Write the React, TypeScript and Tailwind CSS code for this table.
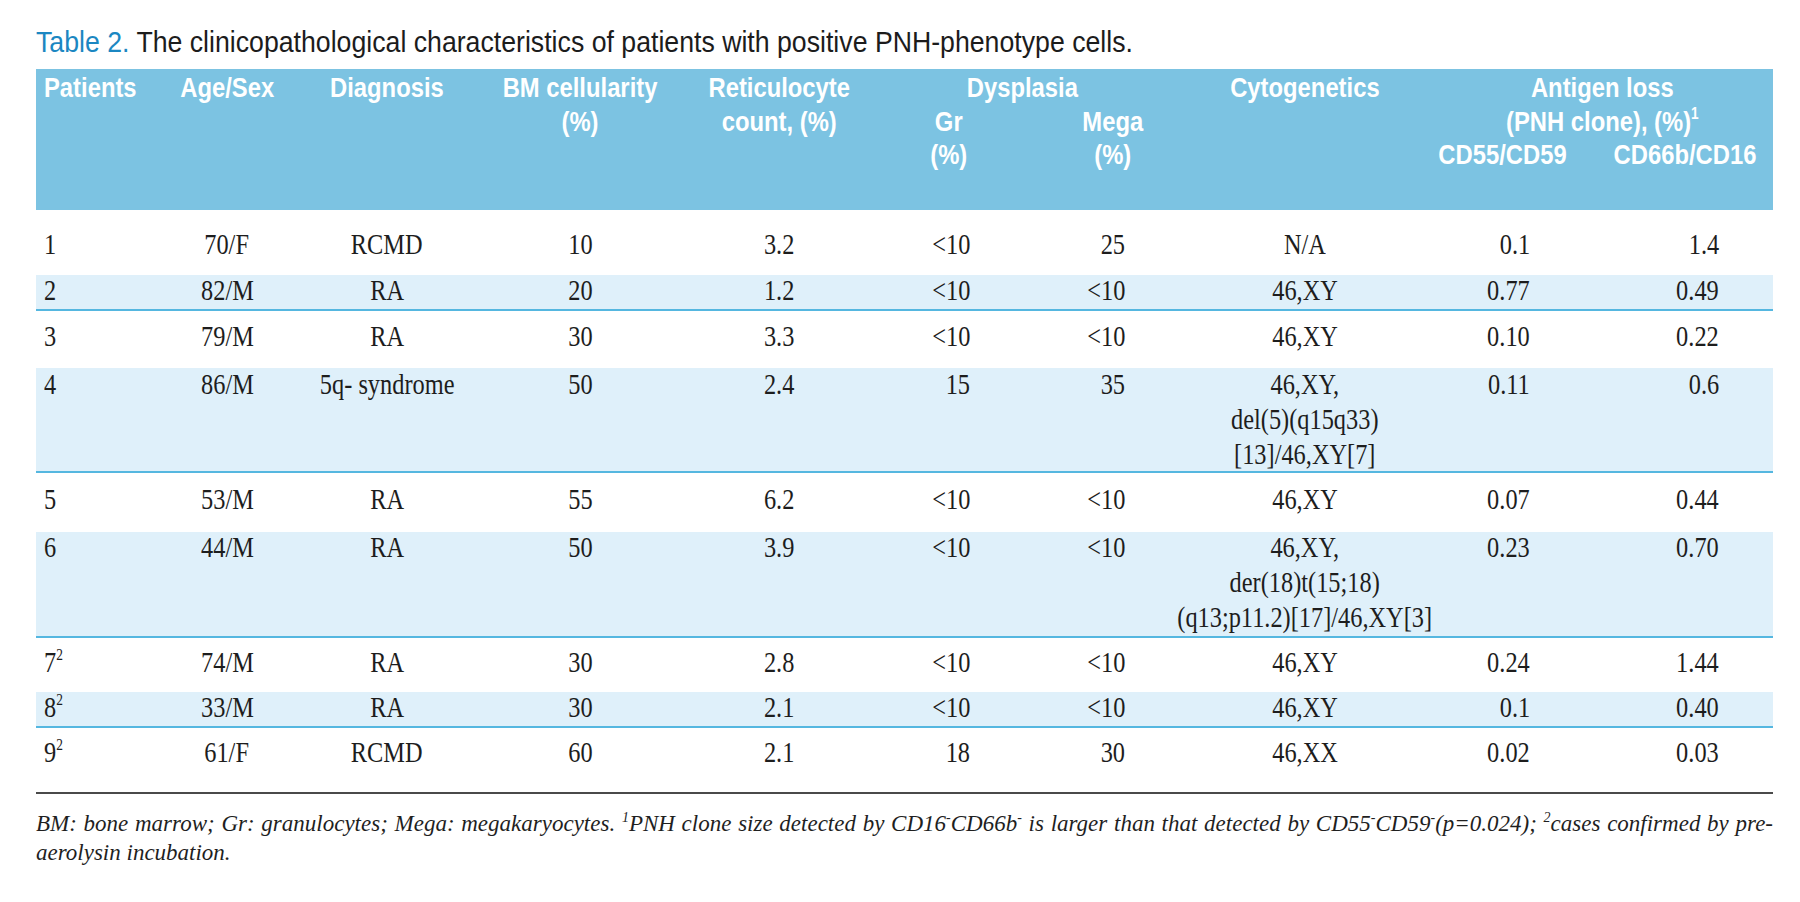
import React from "react";

const gridCols =
  "grid grid-cols-[124px_134px_186px_200px_199px_140px_188px_196px_198px_172px]";

const cellCls = [
  "flex justify-start pl-[8px]",
  "flex justify-center",
  "flex justify-center",
  "flex justify-center",
  "flex justify-center",
  "flex justify-end pr-[49px]",
  "flex justify-end pr-[82px]",
  "flex justify-center",
  "flex justify-end pr-[71px]",
  "flex justify-end pr-[54px]",
];

const originCls = [
  "origin-left text-left",
  "origin-center text-center",
  "origin-center text-center",
  "origin-center text-center",
  "origin-center text-center",
  "origin-right text-right",
  "origin-right text-right",
  "origin-center text-center",
  "origin-right text-right",
  "origin-right text-right",
];

const Sup2 = () => <sup className="text-[16px] relative -top-[12px] leading-none align-baseline">2</sup>;

type Row = {
  h: string;
  mt: string;
  band: boolean;
  cells: React.ReactNode[];
};

const rows: Row[] = [
  { h: "h-[65px]", mt: "mt-[17px]", band: false, cells: ["1", "70/F", "RCMD", "10", "3.2", "<10", "25", "N/A", "0.1", "1.4"] },
  { h: "h-[36px]", mt: "-mt-[2px]", band: true, cells: ["2", "82/M", "RA", "20", "1.2", "<10", "<10", "46,XY", "0.77", "0.49"] },
  { h: "h-[57px]", mt: "mt-[8px]", band: false, cells: ["3", "79/M", "RA", "30", "3.3", "<10", "<10", "46,XY", "0.10", "0.22"] },
  {
    h: "h-[105px]",
    mt: "-mt-[1px]",
    band: true,
    cells: [
      "4",
      "86/M",
      "5q- syndrome",
      "50",
      "2.4",
      "15",
      "35",
      <>
        46,XY,
        <br />
        del(5)(q15q33)
        <br />
        [13]/46,XY[7]
      </>,
      "0.11",
      "0.6",
    ],
  },
  { h: "h-[59px]", mt: "mt-[9px]", band: false, cells: ["5", "53/M", "RA", "55", "6.2", "<10", "<10", "46,XY", "0.07", "0.44"] },
  {
    h: "h-[106px]",
    mt: "-mt-[2px]",
    band: true,
    cells: [
      "6",
      "44/M",
      "RA",
      "50",
      "3.9",
      "<10",
      "<10",
      <>
        46,XY,
        <br />
        der(18)t(15;18)
        <br />
        (q13;p11.2)[17]/46,XY[3]
      </>,
      "0.23",
      "0.70",
    ],
  },
  {
    h: "h-[54px]",
    mt: "mt-[7px]",
    band: false,
    cells: [<>7<Sup2 /></>, "74/M", "RA", "30", "2.8", "<10", "<10", "46,XY", "0.24", "1.44"],
  },
  {
    h: "h-[36px]",
    mt: "-mt-[2px]",
    band: true,
    cells: [<>8<Sup2 /></>, "33/M", "RA", "30", "2.1", "<10", "<10", "46,XY", "0.1", "0.40"],
  },
  {
    h: "h-[64px]",
    mt: "mt-[7px]",
    band: false,
    cells: [<>9<Sup2 /></>, "61/F", "RCMD", "60", "2.1", "18", "30", "46,XX", "0.02", "0.03"],
  },
];

function Hd({ children, origin = "origin-center" }: { children: React.ReactNode; origin?: string }) {
  return <span className={`inline-block whitespace-nowrap scale-x-[0.85] ${origin}`}>{children}</span>;
}

function Header() {
  return (
    <div className="h-[141px] bg-[#7cc3e2] pt-[2px] text-white font-bold text-[28px] leading-[33.5px] font-['Liberation_Sans',Arial,sans-serif]">
      <div className={`${gridCols} grid-rows-[33.5px_33.5px_33.5px]`}>
        <div className="col-start-1 row-start-1 pl-[8px] text-left">
          <Hd origin="origin-left">Patients</Hd>
        </div>
        <div className="col-start-2 row-start-1 text-center">
          <Hd>Age/Sex</Hd>
        </div>
        <div className="col-start-3 row-start-1 text-center">
          <Hd>Diagnosis</Hd>
        </div>
        <div className="col-start-4 row-start-1 row-span-2 text-center">
          <Hd>
            BM cellularity
            <br />
            (%)
          </Hd>
        </div>
        <div className="col-start-5 row-start-1 row-span-2 text-center">
          <Hd>
            Reticulocyte
            <br />
            count, (%)
          </Hd>
        </div>
        <div className="col-start-6 col-span-2 row-start-1 pr-[42px] text-center">
          <Hd>Dysplasia</Hd>
        </div>
        <div className="col-start-6 row-start-2 row-span-2 text-center">
          <Hd>
            Gr
            <br />
            (%)
          </Hd>
        </div>
        <div className="col-start-7 row-start-2 row-span-2 text-center">
          <Hd>
            Mega
            <br />
            (%)
          </Hd>
        </div>
        <div className="col-start-8 row-start-1 text-center">
          <Hd>Cytogenetics</Hd>
        </div>
        <div className="col-start-9 col-span-2 row-start-1 row-span-2 pl-[28px] text-center">
          <Hd>
            Antigen loss
            <br />
            (PNH clone), (%)
            <sup className="text-[16px] relative -top-[12px] leading-none align-baseline">1</sup>
          </Hd>
        </div>
        <div className="col-start-9 row-start-3 text-center">
          <Hd>CD55/CD59</Hd>
        </div>
        <div className="col-start-10 row-start-3 pr-[12px] text-center">
          <Hd>CD66b/CD16</Hd>
        </div>
      </div>
    </div>
  );
}

function BodyRow({ row }: { row: Row }) {
  return (
    <div
      className={`flex flex-col ${row.h} ${
        row.band ? "bg-[#dff0fa] border-b-2 border-[#55b7e0]" : ""
      }`}
    >
      <div className={`${gridCols} ${row.mt}`}>
        {row.cells.map((c, i) => (
          <div key={i} className={cellCls[i]}>
            <span className={`inline-block shrink-0 whitespace-nowrap scale-x-[0.84] ${originCls[i]}`}>{c}</span>
          </div>
        ))}
      </div>
    </div>
  );
}

export default function App() {
  return (
    <div className="w-[1800px] h-[902px] bg-white overflow-hidden">
      <div className="h-[69px] pl-[36px] pt-[26px]">
        <span className="inline-block origin-left scale-x-[0.92] whitespace-nowrap text-[29px] leading-[33px] font-['Liberation_Sans',Arial,sans-serif] text-[#1c1c1c]">
          <span className="text-[#1b87c2]">Table 2.</span> The clinicopathological characteristics of patients with
          positive PNH-phenotype cells.
        </span>
      </div>

      <div className="ml-[36px] w-[1737px]">
        <Header />
        <div className="text-[29px] leading-[35px] text-[#1d1d1d] font-['Liberation_Serif','Times_New_Roman',serif]">
          {rows.map((r, i) => (
            <BodyRow key={i} row={r} />
          ))}
        </div>
      </div>

      <div className="ml-[36px] w-[1737px] border-t-2 border-[#4a4a4a]">
        <div className="mt-[15px] italic text-[23px] leading-[29px] text-[#1f1f1f] font-['Liberation_Serif','Times_New_Roman',serif]">
          <div className="text-justify [text-align-last:justify]">
            BM: bone marrow; Gr: granulocytes; Mega: megakaryocytes.{" "}
            <sup className="text-[14px] relative -top-[9px] leading-none align-baseline">1</sup>PNH clone size detected by
            CD16<sup className="text-[14px] relative -top-[9px] leading-none align-baseline">-</sup>CD66b
            <sup className="text-[14px] relative -top-[9px] leading-none align-baseline">-</sup> is larger than that
            detected by CD55<sup className="text-[14px] relative -top-[9px] leading-none align-baseline">-</sup>CD59
            <sup className="text-[14px] relative -top-[9px] leading-none align-baseline">-</sup>(p=0.024);{" "}
            <sup className="text-[14px] relative -top-[9px] leading-none align-baseline">2</sup>cases confirmed by pre-
          </div>
          <div>aerolysin incubation.</div>
        </div>
      </div>
    </div>
  );
}
